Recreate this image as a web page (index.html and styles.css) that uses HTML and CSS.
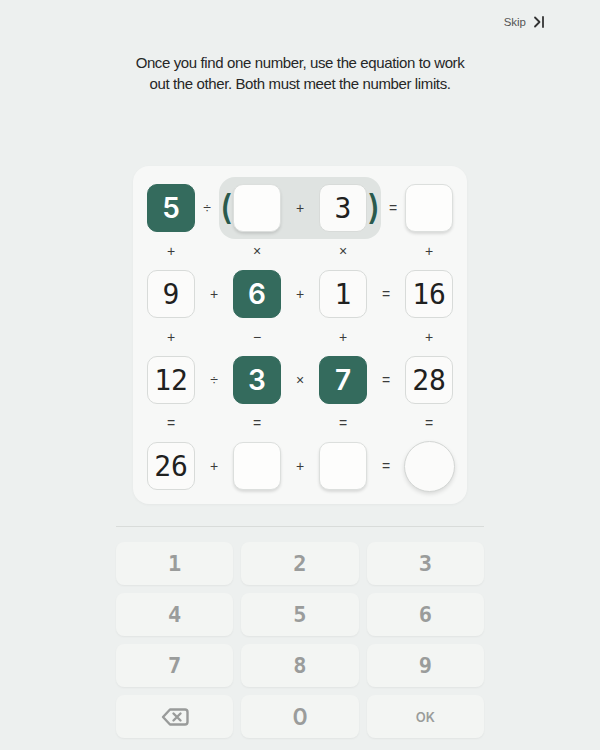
FILE: index.html
```html
<!DOCTYPE html>
<html>
<head>
<meta charset="utf-8">
<link rel="stylesheet" href="styles.css">
</head>
<body>
<div class="page">
  <header class="top">
    <button class="skip">Skip
      <svg class="skip-icon" width="12" height="12" viewBox="0 0 12 12"><path d="M2 1.5 L6.5 6 L2 10.5" fill="none" stroke="#333" stroke-width="1.8" stroke-linecap="round" stroke-linejoin="round"/><path d="M10 1 V11" stroke="#333" stroke-width="1.8" stroke-linecap="round"/></svg>
    </button>
  </header>
  <p class="hint">Once you find one number, use the equation to work out the other. Both must meet the number limits.</p>

  <div class="card">
    <div class="board">
      <!-- row 1 -->
      <div class="cell dark">5</div>
      <div class="op before-group">÷</div>
      <div class="group">
        <span class="paren">(</span>
        <div class="cell empty raised"></div>
        <div class="op">+</div>
        <div class="cell">3</div>
        <span class="paren">)</span>
      </div>
      <div class="op after-group">=</div>
      <div class="cell empty raised"></div>

      <!-- op row -->
      <div class="op">+</div><div></div><div class="op">×</div><div></div><div class="op">×</div><div></div><div class="op">+</div>

      <!-- row 2 -->
      <div class="cell">9</div>
      <div class="op">+</div>
      <div class="cell dark">6</div>
      <div class="op">+</div>
      <div class="cell">1</div>
      <div class="op">=</div>
      <div class="cell">16</div>

      <div class="op">+</div><div></div><div class="op">−</div><div></div><div class="op">+</div><div></div><div class="op">+</div>

      <!-- row 3 -->
      <div class="cell">12</div>
      <div class="op">÷</div>
      <div class="cell dark">3</div>
      <div class="op">×</div>
      <div class="cell dark">7</div>
      <div class="op">=</div>
      <div class="cell">28</div>

      <div class="op">=</div><div></div><div class="op">=</div><div></div><div class="op">=</div><div></div><div class="op">=</div>

      <!-- row 4 -->
      <div class="cell">26</div>
      <div class="op">+</div>
      <div class="cell empty raised"></div>
      <div class="op">+</div>
      <div class="cell empty raised"></div>
      <div class="op">=</div>
      <div class="cell circle"></div>
    </div>
  </div>

  <div class="divider"></div>

  <div class="keypad">
    <button class="key">1</button>
    <button class="key">2</button>
    <button class="key">3</button>
    <button class="key">4</button>
    <button class="key">5</button>
    <button class="key">6</button>
    <button class="key">7</button>
    <button class="key">8</button>
    <button class="key">9</button>
    <button class="key">
      <svg width="28" height="20" viewBox="0 0 28 20"><path d="M9 2.5 H24 a2.5 2.5 0 0 1 2.5 2.5 V15 a2.5 2.5 0 0 1 -2.5 2.5 H9 L2 10 Z" fill="none" stroke="#999b9a" stroke-width="2.4" stroke-linejoin="round"/><path d="M12.5 6.5 L19.5 13.5 M19.5 6.5 L12.5 13.5" stroke="#999b9a" stroke-width="2.4" stroke-linecap="round"/></svg>
    </button>
    <button class="key zero">0</button>
    <button class="key ok">OK</button>
  </div>
</div>
</body>
</html>
```

FILE: styles.css
```css
html, body {
  margin: 0;
  padding: 0;
  background: #edf0ef;
}
body {
  font-family: "Liberation Sans", Arial, sans-serif;
  color: #222;
}
.page {
  width: 600px;
  height: 750px;
  overflow: hidden;
}
.top {
  display: flex;
  justify-content: flex-end;
  padding: 14px 55px 0 0;
  height: 18px;
}
.skip {
  border: none;
  background: none;
  padding: 0;
  font-family: "Liberation Sans", Arial, sans-serif;
  font-size: 11.5px;
  color: #555;
  display: flex;
  align-items: center;
  gap: 7px;
  height: 16px;
}
.skip-icon {
  display: block;
}
.hint {
  width: 334px;
  margin: 20px auto 0;
  text-align: center;
  font-size: 15px;
  line-height: 21px;
  letter-spacing: -0.38px;
  color: #262727;
}
.card {
  width: 334px;
  box-sizing: border-box;
  margin: 72px auto 0;
  padding: 18px 14px 14px;
  background: #f7f8f7;
  border-radius: 16px;
  box-shadow: 0 1px 3px rgba(0,0,0,0.04);
}
.board {
  display: grid;
  grid-template-columns: 48px 38px 48px 38px 48px 38px 48px;
  grid-template-rows: 48px 38px 48px 38px 48px 38px 48px;
}
.op {
  display: flex;
  align-items: center;
  justify-content: center;
  font-size: 14px;
  color: #3b3c3c;
}
.op.before-group {
  padding-right: 14px;
}
.op.after-group {
  padding-left: 14px;
}
.cell {
  box-sizing: border-box;
  width: 48px;
  height: 48px;
  border-radius: 10px;
  background: #fbfbfa;
  border: 1px solid #d8dbd9;
  display: flex;
  align-items: center;
  justify-content: center;
  font-family: "DejaVu Sans Mono", "Liberation Mono", monospace;
  font-size: 28px;
  color: #1f2120;
}
.cell.raised {
  border-color: #dcdfdd;
  box-shadow: 0 2px 3px rgba(0,0,0,0.12);
  background: #fdfdfc;
}
.cell.dark {
  background: #346b5d;
  border-color: #346b5d;
  color: #fff;
  font-family: Inter, "Liberation Sans", sans-serif;
  font-weight: 600;
  font-size: 28px;
}
.cell.circle {
  width: 51px;
  height: 51px;
  border-radius: 50%;
  margin: -1.5px 0 0 -1.5px;
  background: #fbfbfa;
  border-color: #d3d6d4;
  box-shadow: 0 2px 4px rgba(0,0,0,0.12);
}
.group {
  grid-column: 3 / 6;
  margin: -7px -14px;
  display: flex;
  align-items: center;
  background: #dfe3e1;
  border-radius: 16px;
}
.group .op {
  width: 38px;
  height: 48px;
}
.paren {
  width: 14px;
  text-align: center;
  font-size: 34px;
  line-height: 48px;
  color: #2a5a4d;
  font-family: Inter, "DejaVu Sans", sans-serif;
  font-weight: 500;
  margin-top: -3px;
}
.divider {
  width: 368px;
  height: 1px;
  background: #d9dcda;
  margin: 22px auto 0;
}
.keypad {
  width: 368px;
  margin: 15px auto 0;
  display: grid;
  grid-template-columns: repeat(3, 1fr);
  grid-auto-rows: 43px;
  column-gap: 8px;
  row-gap: 8px;
}
.key {
  border: none;
  border-radius: 8px;
  background: #f3f5f3;
  box-shadow: 0 1px 2px rgba(0,0,0,0.05);
  display: flex;
  align-items: center;
  justify-content: center;
  font-family: "DejaVu Sans Mono", "Liberation Mono", monospace;
  font-weight: bold;
  font-size: 22px;
  color: #9a9c9b;
  padding: 0;
}
.key.zero {
  font-family: Inter, "Liberation Sans", sans-serif;
  font-weight: 600;
  font-size: 23px;
}
.key.ok {
  font-family: Inter, "Liberation Sans", sans-serif;
  font-size: 13px;
  font-weight: 600;
}
```
